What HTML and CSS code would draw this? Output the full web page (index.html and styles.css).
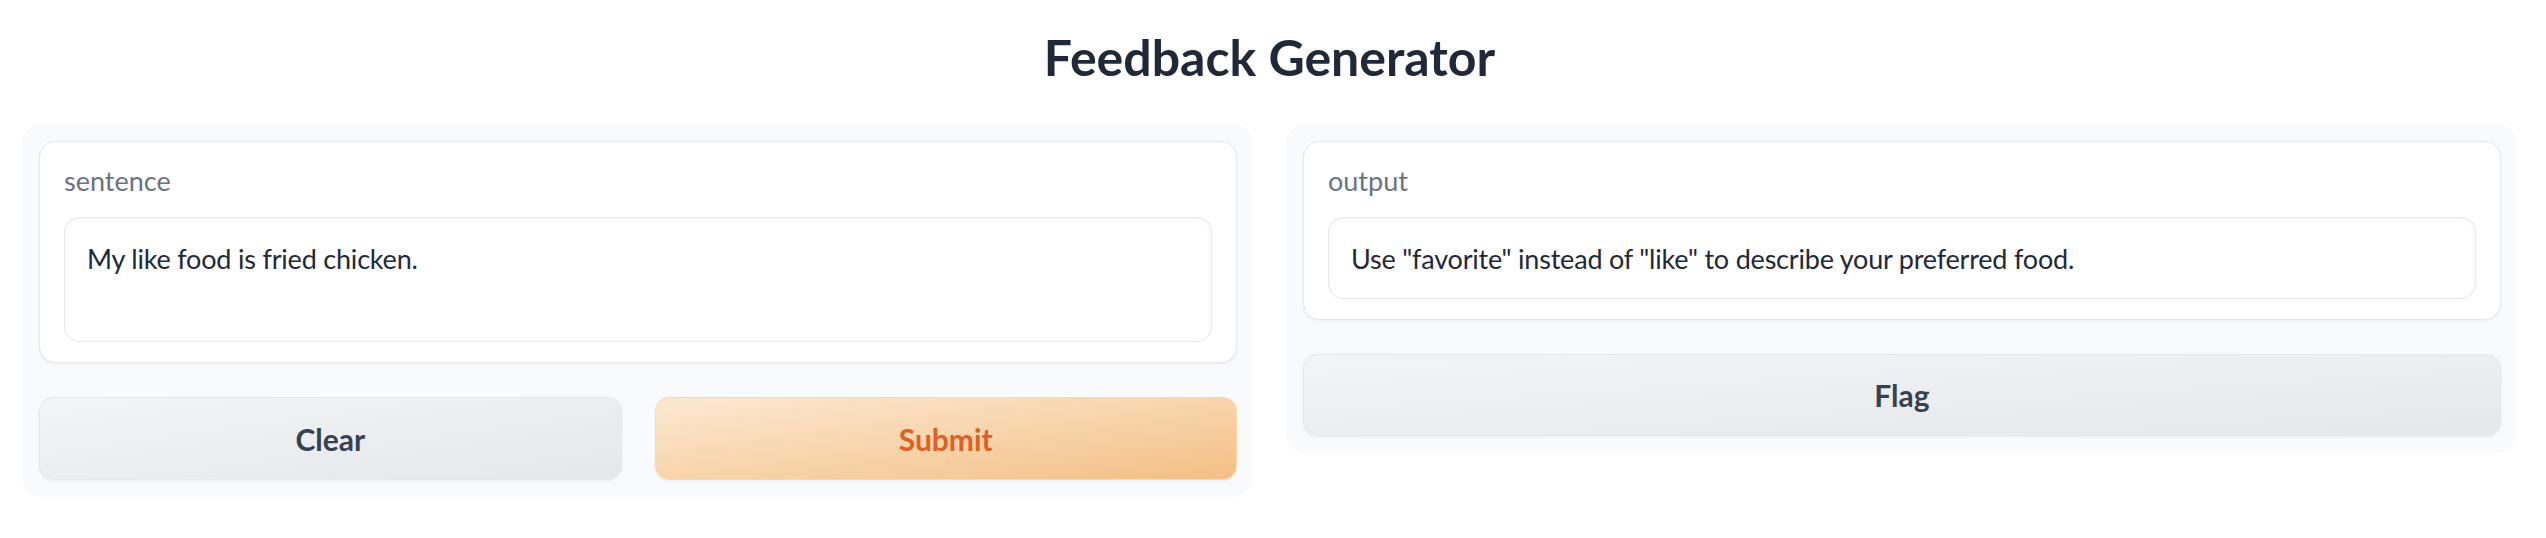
FILE: index.html
```html
<!DOCTYPE html>
<html lang="en">
<head>
<meta charset="utf-8">
<title>Feedback Generator</title>
<link rel="stylesheet" href="styles.css">
</head>
<body>
<div class="app">
  <h1 class="title">Feedback Generator</h1>
  <div class="row">
    <div class="panel">
      <div class="block">
        <label class="label" for="sentence">sentence</label>
        <textarea id="sentence" class="input tall">My like food is fried chicken.</textarea>
      </div>
      <div class="btn-row">
        <button class="btn secondary">Clear</button>
        <button class="btn primary">Submit</button>
      </div>
    </div>
    <div class="panel">
      <div class="block">
        <label class="label" for="output">output</label>
        <textarea id="output" class="input short" readonly>Use "favorite" instead of "like" to describe your preferred food.</textarea>
      </div>
      <button class="btn secondary full">Flag</button>
    </div>
  </div>
</div>
</body>
</html>
```

FILE: styles.css
```css
* { box-sizing: border-box; }

body {
  margin: 0;
  background: #ffffff;
  font-family: "Source Sans Pro", Lato, "Liberation Sans", sans-serif;
  color: #1f2937;
}

.app {
  padding: 27px 29px 0 22px;
}

.title {
  margin: 0 0 37px;
  text-align: center;
  font-size: 50px;
  line-height: 60px;
  font-weight: 700;
  color: #1f2937;
}

.row {
  display: flex;
  gap: 33px;
  align-items: flex-start;
}

.panel {
  flex: 1 1 0;
  min-width: 0;
  background: #f9fafb;
  border-radius: 20px;
  padding: 17px 16px 17px 17px;
  display: flex;
  flex-direction: column;
  gap: 34px;
}

.block {
  background: #ffffff;
  border: 1px solid #e5e7eb;
  border-radius: 16px;
  box-shadow: 0 1px 3px rgba(0, 0, 0, 0.05);
  padding: 18px 24px 20px;
  display: flex;
  flex-direction: column;
}

.label {
  display: block;
  font-size: 27px;
  line-height: 42px;
  color: #6b7280;
  margin-bottom: 15px;
}

.input {
  display: block;
  width: 100%;
  resize: none;
  font-family: inherit;
  font-size: 27px;
  line-height: 42px;
  letter-spacing: -0.2px;
  color: #1f2937;
  background: #ffffff;
  border: 1px solid #e5e7eb;
  border-radius: 15px;
  padding: 20px 22px 18px;
  box-shadow: inset 0 2px 4px rgba(0, 0, 0, 0.04);
  outline: none;
  overflow: hidden;
}

.input.tall { height: 125px; }
.input.short { height: 82px; }

.btn-row {
  display: flex;
  gap: 33px;
}

.btn {
  flex: 1 1 0;
  height: 83px;
  border-radius: 14px;
  font-family: inherit;
  font-size: 30px;
  font-weight: 700;
  cursor: pointer;
  box-shadow: 0 1px 3px rgba(0, 0, 0, 0.06);
}

.btn.full {
  flex: none;
  width: 100%;
  height: 82px;
}

.btn.secondary {
  border: 1px solid #e5e7eb;
  background: linear-gradient(to bottom right, #f3f4f6, #e5e7eb);
  color: #374151;
}

.btn.primary {
  border: 1px solid #fcd9ac;
  background: linear-gradient(to bottom right, #fce9d2, #f3bf85);
  color: #df5f24;
}
```
